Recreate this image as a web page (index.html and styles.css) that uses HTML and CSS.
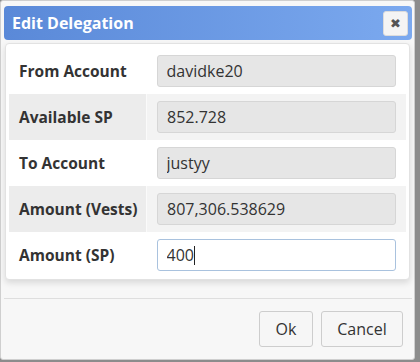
FILE: index.html
```html
<!DOCTYPE html>
<html>
	<head>
		<meta charset="UTF-8">
		<title>Edit Delegation</title>
		<link rel="stylesheet" href="styles.css">
	</head>
	<body>
		<div class="dialog">
			<div class="titlebar">
				<span class="title">Edit Delegation</span>
				<button class="close" type="button">&#x2716;</button>
			</div>
			<div class="panel">
				<table>
					<tr>
						<th>From Account</th>
						<td><input type="text" value="davidke20" readonly></td>
					</tr>
					<tr class="alt">
						<th>Available SP</th>
						<td><input type="text" value="852.728" readonly></td>
					</tr>
					<tr>
						<th>To Account</th>
						<td><input type="text" value="justyy" readonly></td>
					</tr>
					<tr class="alt">
						<th>Amount (Vests)</th>
						<td><input type="text" value="807,306.538629" readonly></td>
					</tr>
					<tr>
						<th>Amount (SP)</th>
						<td><input type="text" class="active" value="400"><span class="caret"></span></td>
					</tr>
				</table>
			</div>
			<div class="buttons">
				<button type="button" class="ok">Ok</button>
				<button type="button" class="cancel">Cancel</button>
			</div>
		</div>
	</body>
</html>
```

FILE: styles.css
```css
body {
    font-family: "Open Sans", "DejaVu Sans", sans-serif;
    font-size: 16px;
    margin: 0; padding: 0;
    background: #8c8c8c;
    color: #333;
}

.dialog {
    width: 415px;
    height: 360px;
    background: #f7f7f7;
    border: 1px solid #cfcfcf;
    border-radius: 3px;
    padding: 5px 2px 0 3px;
    box-sizing: border-box;
    display: flex; flex-direction: column;
}

.titlebar {
    height: 34px;
    border-radius: 4px;
    background: linear-gradient(to right, #5a89d8, #7ba9ef);
    display: flex;
    align-items: center;
    justify-content: space-between;
    padding: 0 4px 0 8px;
    flex: none;
}

.title {
    color: #fff;
    font-weight: bold;
    font-size: 16px;
}

.close {
    width: 25px; height: 25px;
    padding: 0;
    border: 1px solid #dcdcdc;
    border-radius: 3px;
    background: #f4f4f4;
    color: #555;
    font-size: 13px;
    line-height: 23px;
    font-family: "DejaVu Sans", sans-serif;
}

.panel {
    margin: 3px 2px 0 1px;
    padding: 4px 3px 1px 3px;
    background: #fff;
    border: 1px solid #e2e2e2;
    border-radius: 4px;
    box-shadow: 0 3px 6px rgba(0, 0, 0, .12);
    flex: none;
}

table {
    width: 100%;
    border-collapse: collapse;
}

tr {
    height: 46px;
}

th {
    width: 127px;
    text-align: left;
    padding: 0 0 0 10px;
    font-weight: bold;
    font-size: 15.5px;
    color: #333;
}

td {
    padding: 0 10px;
    position: relative;
}

tr.alt th {
    background: #ececec;
    border-right: 1px solid #fafafa;
}

tr.alt td {
    background: #f3f3f3;
}

input {
    width: 100%;
    height: 32px;
    box-sizing: border-box;
    padding: 0 9px;
    font-family: inherit;
    font-size: 16px;
    color: #333;
    background: #e6e6e6;
    border: 1px solid #d6d6d6;
    border-radius: 3px;
    outline: none;
}

input.active {
    background: #fff;
    border-color: #a9c2de;
}

.caret {
    position: absolute;
    left: 47px; top: 14px;
    width: 1px; height: 19px;
    background: #222;
}

.buttons {
    margin-top: 18px;
    border-top: 1px solid #dedede;
    display: flex;
    justify-content: flex-end;
    gap: 8px;
    padding: 12px 9px 0 0;
}

.buttons button {
    height: 36px;
    padding: 0;
    font-family: inherit;
    font-size: 16px;
    color: #333;
    background: #f6f6f6;
    border: 1px solid #cdcdcd;
    border-radius: 3px;
}

.buttons .ok {
    width: 54px;
}

.buttons .cancel {
    width: 82px;
}
```
